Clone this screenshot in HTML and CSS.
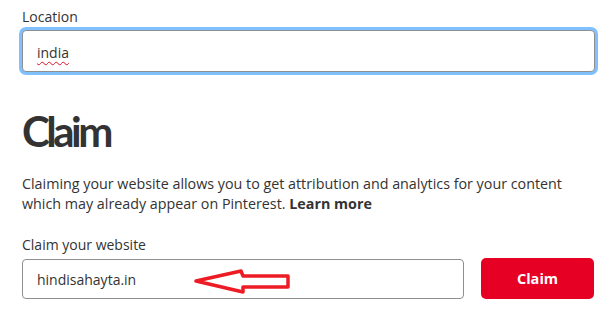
FILE: index.html
```html
<!DOCTYPE html>
<html lang="en">
<head>
<meta charset="utf-8">
<title>Claim</title>
<link rel="stylesheet" href="styles.css">
</head>
<body>
<div class="page">
  <div class="label">Location</div>
  <div class="field field-focused"><span class="misspelled">india</span></div>

  <h1 class="title">Claim</h1>
  <p class="desc">Claiming your website allows you to get attribution and analytics for your content which may already appear on Pinterest. <b class="learn">Learn more</b></p>

  <div class="label label-claim">Claim your website</div>
  <div class="claim-row">
    <div class="field field-website">
      <span>hindisahayta.in</span>
      <svg class="arrow" width="102" height="29" viewBox="0 0 102 29" aria-hidden="true">
        <path d="M5 14 L50 4 L52 9 L97 9 L97 20 L52 20 L52 25 Z" fill="none" stroke="#ed1c24" stroke-width="3.5" stroke-linejoin="round"/>
      </svg>
    </div>
    <button class="btn-claim" type="button">Claim</button>
  </div>
</div>
</body>
</html>
```

FILE: styles.css
```css
* { box-sizing: border-box; }

html, body {
  margin: 0;
  background: #ffffff;
}

body {
  font-family: "Open Sans", "Noto Sans", "Liberation Sans", sans-serif;
  color: #333333;
  font-size: 14px;
  line-height: 20px;
}

.page {
  padding: 7px 20px 0 22px;
}

.label {
  font-size: 14px;
  line-height: 20px;
  color: #333333;
}

.field {
  position: relative;
  border: 1px solid #8f8f8f;
  border-radius: 4px;
  background: #ffffff;
  padding: 12px 14px 0;
  font-size: 14px;
  line-height: 20px;
  color: #333333;
}

.field-focused {
  margin-top: 3px;
  height: 42px;
  box-shadow: 0 0 0 3px #7fc1ff;
}

.misspelled {
  text-decoration: underline wavy #e0102a;
  text-decoration-thickness: 1px;
  text-underline-offset: 3px;
}

.title {
  margin: 38px 0 0;
  font-family: "Lato", "Open Sans", sans-serif;
  font-size: 42px;
  line-height: 42px;
  font-weight: 700;
  letter-spacing: -3.5px;
  color: #333333;
}

.desc {
  margin: 22px 0 0;
  font-size: 14.3px;
  line-height: 20px;
  max-width: 565px;
}

.learn {
  font-weight: 700;
}

.label-claim {
  margin-top: 21px;
}

.claim-row {
  margin-top: 3px;
  display: flex;
  align-items: center;
  gap: 17px;
}

.field-website {
  flex: 0 0 442px;
  height: 40px;
  padding-top: 10px;
}

.arrow {
  position: absolute;
  left: 168px;
  top: 7px;
}

.btn-claim {
  flex: 0 0 113px;
  height: 41px;
  border: 0;
  border-radius: 5px;
  background: #e60023;
  color: #ffffff;
  font-family: "Open Sans", "Noto Sans", "Liberation Sans", sans-serif;
  font-size: 14.5px;
  font-weight: 700;
  padding: 0;
}
```
